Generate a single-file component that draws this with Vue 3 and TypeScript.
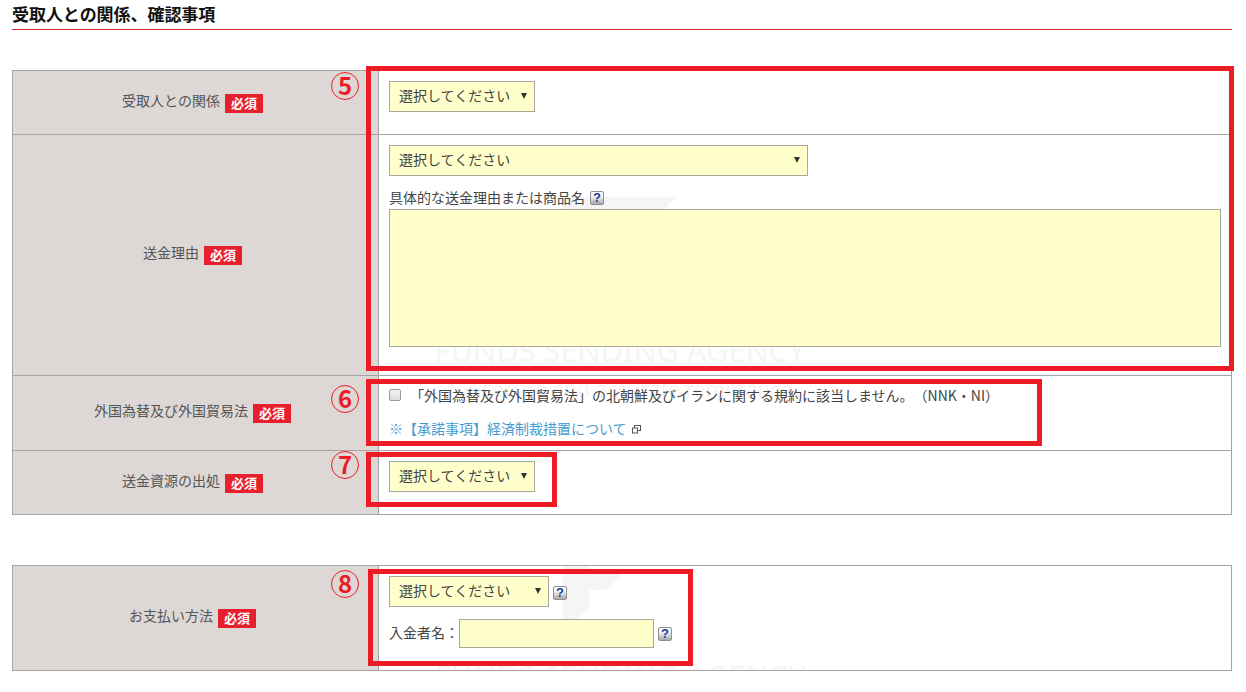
<script setup lang="ts">
const frames: number[] = [5, 6, 7, 8]
const prompt = '選択してください'
</script>

<template>
  <div class="page">
    <h2 class="title">受取人との関係、確認事項</h2>

    <section class="table first">
      <div class="watermark">
        <svg class="wm-logo" width="396" height="112" viewBox="0 0 396 112">
          <path d="M141 0H254L229 25H167V49H202L184 67H167V84L141 110Z" fill="#f5f5f5" />
        </svg>
        <div class="wm-name">FUNDS SENDING AGENCY</div>
        <div class="wm-sub">for secure and accurate remittance</div>
      </div>

      <div class="row r1">
        <div class="label">受取人との関係<span class="req">必須</span></div>
        <div class="value">
          <div class="sel w146"><select><option>{{ prompt }}</option></select></div>
        </div>
      </div>

      <div class="row r2">
        <div class="label">送金理由<span class="req">必須</span></div>
        <div class="value">
          <div class="sel w419"><select><option>{{ prompt }}</option></select></div>
          <div class="reason">具体的な送金理由または商品名<span class="help">?</span></div>
          <textarea class="area"></textarea>
        </div>
      </div>

      <div class="row r3">
        <div class="label">外国為替及び外国貿易法<span class="req">必須</span></div>
        <div class="value law">
          <label class="check">
            <input type="checkbox" />
            <span>「外国為替及び外国貿易法」の北朝鮮及びイランに関する規約に該当しません。（NNK・NI）</span>
          </label>
          <a class="link" href="#">※【承諾事項】経済制裁措置について
            <svg class="ext" width="9" height="10" viewBox="0 0 9 10">
              <rect x="2.5" y="1.5" width="6" height="5" fill="none" stroke="#555" />
              <rect x="0.5" y="4" width="5" height="5" fill="#fff" stroke="#555" />
            </svg>
          </a>
        </div>
      </div>

      <div class="row r4">
        <div class="label">送金資源の出処<span class="req">必須</span></div>
        <div class="value">
          <div class="sel w146"><select><option>{{ prompt }}</option></select></div>
        </div>
      </div>
    </section>

    <section class="table second">
      <div class="watermark">
        <svg class="wm-logo" width="396" height="112" viewBox="0 0 396 112">
          <path d="M141 0H254L229 25H167V49H202L184 67H167V84L141 110Z" fill="#f5f5f5" />
        </svg>
        <div class="wm-name">FUNDS SENDING AGENCY</div>
      </div>

      <div class="row r5">
        <div class="label">お支払い方法<span class="req">必須</span></div>
        <div class="value">
          <div class="line top">
            <div class="sel w160"><select><option>{{ prompt }}</option></select></div>
            <span class="help">?</span>
          </div>
          <div class="line payer">
            <span class="payer-label">入金者名：</span>
            <input class="name" type="text" />
            <span class="help">?</span>
          </div>
        </div>
      </div>
    </section>

    <div v-for="f in frames" :key="'f' + f" class="frame" :class="'frame' + f"></div>
    <div v-for="f in frames" :key="'m' + f" class="mark" :class="'mark' + f">{{ f }}</div>
  </div>
</template>

<style>
html, body { margin: 0; background: #fff; }
</style>

<style scoped>
.page {
  position: relative;
  width: 1246px;
  height: 692px;
  box-sizing: border-box;
  padding: 0 14px 0 12px;
  overflow: hidden;
  font-family: "Noto Sans CJK JP", "Noto Sans", sans-serif;
  font-size: 14px;
  color: #444;
  text-spacing-trim: space-all;
}
.title {
  margin: 0 0 40px;
  height: 29px;
  line-height: 28px;
  font-size: 17px;
  letter-spacing: -0.05px;
  font-weight: 700;
  color: #111;
  border-bottom: 1px solid #d9252c;
}
.table {
  position: relative;
  box-sizing: border-box;
  border: 1px solid #a9a3a3;
  overflow: hidden;
  background: #fff;
}
.first { margin-bottom: 50px; }
.watermark {
  position: absolute;
  left: 409px;
  width: 396px;
  color: #f5f5f5;
  white-space: nowrap;
  font-family: "Noto Sans", sans-serif;
}
.first .watermark { top: 126px; }
.second .watermark { top: -43px; }
.wm-logo { display: block; }
.wm-name {
  margin-top: 21px;
  font-size: 30.7px;
  line-height: 40px;
  text-align: center;
}
.wm-sub {
  margin-top: 6px;
  font-size: 21px;
  line-height: 26px;
  text-align: center;
}
.row {
  position: relative;
  display: grid;
  grid-template-columns: 366px 1fr;
  border-bottom: 1px solid #a9a3a3;
}
.row:last-child { border-bottom: 0; }
.r1 { height: 64px; box-sizing: border-box; }
.r2 { height: 241px; box-sizing: border-box; }
.r3 { height: 75px; box-sizing: border-box; }
.r4 { height: 63px; }
.r5 { height: 104px; }
.label {
  display: flex;
  align-items: center;
  justify-content: center;
  box-sizing: border-box;
  padding: 0 6px 6px 0;
  background: #ddd8d6;
  border-right: 1px solid #a9a3a3;
  color: #555;
}
.req {
  display: inline-block;
  width: 38px;
  height: 19px;
  margin: 7px 0 0 5px;
  background: #e8202d;
  color: #fff;
  font-family: "Noto Sans CJK JP", serif;
  font-size: 13px;
  font-weight: 700;
  line-height: 18px;
  text-align: center;
}
.value { padding: 10px 10px 0; }
.sel {
  position: relative;
  box-sizing: border-box;
  height: 31px;
}
.sel::after {
  content: "";
  position: absolute;
  right: 8px;
  top: 12px;
  border-left: 3px solid transparent;
  border-right: 3px solid transparent;
  border-top: 6px solid #333;
  pointer-events: none;
}
.sel select {
  appearance: none;
  width: 100%;
  height: 100%;
  box-sizing: border-box;
  padding: 0 0 4px 9px;
  margin: 0;
  border: 1px solid #aaa69c;
  border-radius: 0;
  background: #ffc;
  color: #444;
  font: inherit;
}
.w146 { width: 146px; }
.w419 { width: 419px; }
.w160 { width: 160px; }
.reason {
  display: flex;
  align-items: center;
  height: 20px;
  margin-top: 11px;
  color: #444;
}
.help {
  display: inline-block;
  flex: none;
  box-sizing: border-box;
  width: 14px;
  height: 14px;
  margin: 1px 0 0 5px;
  border: 1px solid #8f8f8f;
  border-radius: 2px;
  background: linear-gradient(#fafafa 30%, #a8a8a8);
  color: #0f3f9c;
  font-family: "Liberation Sans", sans-serif;
  font-size: 13px;
  font-weight: 700;
  line-height: 12px;
  text-align: center;
}
.area {
  display: block;
  width: 832px;
  height: 138px;
  box-sizing: border-box;
  margin: 2px 0 0;
  border: 1px solid #aaa69c;
  background: #ffc;
  resize: none;
}
.law { padding-top: 9px; }
.check {
  display: flex;
  align-items: center;
  height: 22px;
  white-space: nowrap;
}
.check span { padding-bottom: 2px; }
.check input {
  appearance: none;
  flex: none;
  box-sizing: border-box;
  width: 12px;
  height: 12px;
  margin: 0 9px 2px 0;
  border: 1px solid #999;
  border-radius: 2px;
  background: linear-gradient(#f4f4f4, #dcdcdc);
}
.link {
  display: inline-flex;
  align-items: center;
  height: 22px;
  box-sizing: border-box;
  padding-bottom: 2px;
  margin-top: 11px;
  color: #4a9bd0;
  text-decoration: none;
}
.ext { margin: 2px 0 0 5px; }
.line { display: flex; align-items: center; }
.line .help { margin: 0 0 0 4px; }
.line.top .help { margin-top: 3px; }
.payer { margin-top: 12px; color: #444; }
.payer-label { padding-bottom: 3px; }
.name {
  box-sizing: border-box;
  width: 195px;
  height: 29px;
  margin: 0;
  border: 1px solid #aaa69c;
  background: #ffc;
}
.frame {
  position: absolute;
  box-sizing: border-box;
  border: 5px solid #ed1c24;
}
.frame5 { left: 366px; top: 66px; width: 868px; height: 305px; }
.frame6 { left: 366px; top: 379px; width: 676px; height: 67px; }
.frame7 { left: 366px; top: 452px; width: 191px; height: 55px; }
.frame8 { left: 368px; top: 569px; width: 325px; height: 97px; }
.mark {
  position: absolute;
  left: 331px;
  box-sizing: border-box;
  width: 28px;
  height: 28px;
  border: 1px solid #ed1c24;
  border-radius: 50%;
  color: #ed1c24;
  font-family: "Noto Sans CJK JP", sans-serif;
  font-size: 24px;
  font-weight: 700;
  line-height: 24px;
  text-align: center;
}
.mark5 { top: 72px; }
.mark6 { top: 385px; }
.mark7 { top: 451px; }
.mark8 { top: 570px; }
</style>
